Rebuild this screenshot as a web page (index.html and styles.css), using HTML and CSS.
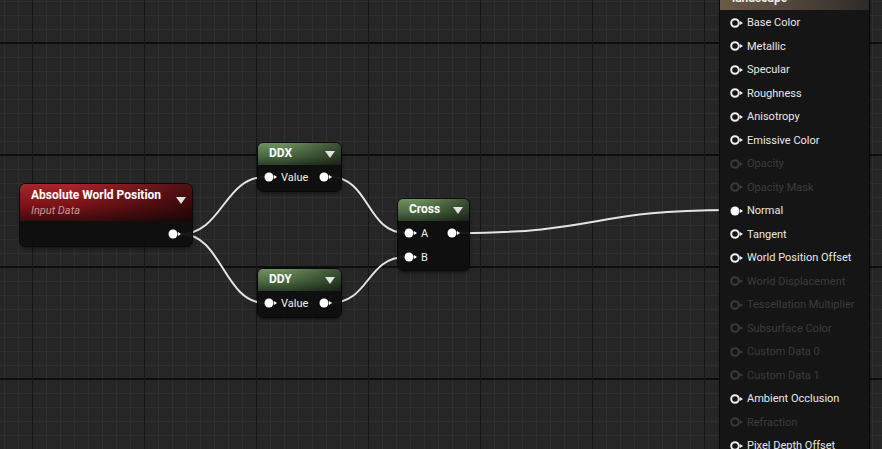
FILE: index.html
```html
<!DOCTYPE html>
<html lang="en">
<head>
  <meta charset="UTF-8" />
  <title>Material Graph</title>
  <link rel="stylesheet" href="styles.css">
</head>
<body>
  <div class="graph">
    <svg class="wires" width="882" height="449" viewBox="0 0 882 449">
      <path d="M181,234 C222,234 224,177 265,177" />
      <path d="M181,234 C222,234 224,303 265,303" />
      <path d="M330,177 C370,177 366,233 406,233" />
      <path d="M330,303 C370,303 366,257 406,257" />
      <path d="M459,233 C600,233 590,210 731,210" />
    </svg>

    <!-- Absolute World Position -->
    <div class="node node-awp">
      <div class="node-head head-red">
        <div>
          <div class="node-title">Absolute World Position</div>
          <div class="node-sub">Input Data</div>
        </div>
        <span class="caret"></span>
      </div>
      <div class="node-body">
        <div class="pin-row out-only">
          <svg class="pin" width="14" height="10" viewBox="0 0 14 10"><circle cx="5" cy="5" r="4.5"/><path d="M10,3 L13,5 L10,7 Z"/></svg>
        </div>
      </div>
    </div>

    <!-- DDX -->
    <div class="node node-ddx">
      <div class="node-head head-green">
        <div class="node-title">DDX</div>
        <span class="caret"></span>
      </div>
      <div class="node-body">
        <div class="pin-row">
          <span class="pin-in">
            <svg class="pin" width="14" height="10" viewBox="0 0 14 10"><circle cx="5" cy="5" r="4.5"/><path d="M10,3 L13,5 L10,7 Z"/></svg>
            Value
          </span>
          <svg class="pin" width="14" height="10" viewBox="0 0 14 10"><circle cx="5" cy="5" r="4.5"/><path d="M10,3 L13,5 L10,7 Z"/></svg>
        </div>
      </div>
    </div>

    <!-- DDY -->
    <div class="node node-ddy">
      <div class="node-head head-green">
        <div class="node-title">DDY</div>
        <span class="caret"></span>
      </div>
      <div class="node-body">
        <div class="pin-row">
          <span class="pin-in">
            <svg class="pin" width="14" height="10" viewBox="0 0 14 10"><circle cx="5" cy="5" r="4.5"/><path d="M10,3 L13,5 L10,7 Z"/></svg>
            Value
          </span>
          <svg class="pin" width="14" height="10" viewBox="0 0 14 10"><circle cx="5" cy="5" r="4.5"/><path d="M10,3 L13,5 L10,7 Z"/></svg>
        </div>
      </div>
    </div>

    <!-- Cross -->
    <div class="node node-cross">
      <div class="node-head head-green">
        <div class="node-title">Cross</div>
        <span class="caret"></span>
      </div>
      <div class="node-body">
        <div class="pin-row">
          <span class="pin-in">
            <svg class="pin" width="14" height="10" viewBox="0 0 14 10"><circle cx="5" cy="5" r="4.5"/><path d="M10,3 L13,5 L10,7 Z"/></svg>
            A
          </span>
          <svg class="pin" width="14" height="10" viewBox="0 0 14 10"><circle cx="5" cy="5" r="4.5"/><path d="M10,3 L13,5 L10,7 Z"/></svg>
        </div>
        <div class="pin-row">
          <span class="pin-in">
            <svg class="pin" width="14" height="10" viewBox="0 0 14 10"><circle cx="5" cy="5" r="4.5"/><path d="M10,3 L13,5 L10,7 Z"/></svg>
            B
          </span>
        </div>
      </div>
    </div>

    <!-- Material result node -->
    <div class="result">
      <div class="result-head">landscape</div>
      <ul class="inputs">
        <li><svg class="ring" width="14" height="10" viewBox="0 0 14 10"><circle cx="5" cy="5" r="3.8"/><path d="M10,3 L13,5 L10,7 Z"/></svg>Base Color</li>
        <li><svg class="ring" width="14" height="10" viewBox="0 0 14 10"><circle cx="5" cy="5" r="3.8"/><path d="M10,3 L13,5 L10,7 Z"/></svg>Metallic</li>
        <li><svg class="ring" width="14" height="10" viewBox="0 0 14 10"><circle cx="5" cy="5" r="3.8"/><path d="M10,3 L13,5 L10,7 Z"/></svg>Specular</li>
        <li><svg class="ring" width="14" height="10" viewBox="0 0 14 10"><circle cx="5" cy="5" r="3.8"/><path d="M10,3 L13,5 L10,7 Z"/></svg>Roughness</li>
        <li><svg class="ring" width="14" height="10" viewBox="0 0 14 10"><circle cx="5" cy="5" r="3.8"/><path d="M10,3 L13,5 L10,7 Z"/></svg>Anisotropy</li>
        <li><svg class="ring" width="14" height="10" viewBox="0 0 14 10"><circle cx="5" cy="5" r="3.8"/><path d="M10,3 L13,5 L10,7 Z"/></svg>Emissive Color</li>
        <li class="off"><svg class="ring" width="14" height="10" viewBox="0 0 14 10"><circle cx="5" cy="5" r="3.8"/><path d="M10,3 L13,5 L10,7 Z"/></svg>Opacity</li>
        <li class="off"><svg class="ring" width="14" height="10" viewBox="0 0 14 10"><circle cx="5" cy="5" r="3.8"/><path d="M10,3 L13,5 L10,7 Z"/></svg>Opacity Mask</li>
        <li><svg class="pin" width="14" height="10" viewBox="0 0 14 10"><circle cx="5" cy="5" r="4.5"/><path d="M10,3 L13,5 L10,7 Z"/></svg>Normal</li>
        <li><svg class="ring" width="14" height="10" viewBox="0 0 14 10"><circle cx="5" cy="5" r="3.8"/><path d="M10,3 L13,5 L10,7 Z"/></svg>Tangent</li>
        <li><svg class="ring" width="14" height="10" viewBox="0 0 14 10"><circle cx="5" cy="5" r="3.8"/><path d="M10,3 L13,5 L10,7 Z"/></svg>World Position Offset</li>
        <li class="off"><svg class="ring" width="14" height="10" viewBox="0 0 14 10"><circle cx="5" cy="5" r="3.8"/><path d="M10,3 L13,5 L10,7 Z"/></svg>World Displacement</li>
        <li class="off"><svg class="ring" width="14" height="10" viewBox="0 0 14 10"><circle cx="5" cy="5" r="3.8"/><path d="M10,3 L13,5 L10,7 Z"/></svg>Tessellation Multiplier</li>
        <li class="off"><svg class="ring" width="14" height="10" viewBox="0 0 14 10"><circle cx="5" cy="5" r="3.8"/><path d="M10,3 L13,5 L10,7 Z"/></svg>Subsurface Color</li>
        <li class="off"><svg class="ring" width="14" height="10" viewBox="0 0 14 10"><circle cx="5" cy="5" r="3.8"/><path d="M10,3 L13,5 L10,7 Z"/></svg>Custom Data 0</li>
        <li class="off"><svg class="ring" width="14" height="10" viewBox="0 0 14 10"><circle cx="5" cy="5" r="3.8"/><path d="M10,3 L13,5 L10,7 Z"/></svg>Custom Data 1</li>
        <li><svg class="ring" width="14" height="10" viewBox="0 0 14 10"><circle cx="5" cy="5" r="3.8"/><path d="M10,3 L13,5 L10,7 Z"/></svg>Ambient Occlusion</li>
        <li class="off"><svg class="ring" width="14" height="10" viewBox="0 0 14 10"><circle cx="5" cy="5" r="3.8"/><path d="M10,3 L13,5 L10,7 Z"/></svg>Refraction</li>
        <li><svg class="ring" width="14" height="10" viewBox="0 0 14 10"><circle cx="5" cy="5" r="3.8"/><path d="M10,3 L13,5 L10,7 Z"/></svg>Pixel Depth Offset</li>
      </ul>
    </div>
  </div>
</body>
</html>
```

FILE: styles.css
```css
* {
  margin: 0;
  padding: 0;
  box-sizing: border-box;
}

body {
  background-color: #262626;
  font-family: Roboto, 'Liberation Sans', sans-serif;
  color: #e6e6e6;
  overflow: hidden;
}

.graph {
  position: relative;
  width: 882px;
  height: 449px;
  overflow: hidden;
  background-color: #262626;
  background-image:
    linear-gradient(to right, #161616 1px, transparent 1px),
    linear-gradient(to bottom, #0e0e0e 2px, transparent 2px),
    linear-gradient(to right, #303030 1px, transparent 1px),
    linear-gradient(to bottom, #303030 1px, transparent 1px);
  background-size: 112px 112px, 112px 112px, 14px 14px, 14px 14px;
  background-position: 32px 0, 0 42px, 32px 0, 0 43px;
}

.wires {
  position: absolute;
  left: 0;
  top: 0;
}

.wires path {
  fill: none;
  stroke: #e4e4e4;
  stroke-width: 2;
}

/* graph nodes */
.node {
  position: absolute;
  background: rgba(14, 14, 14, 0.95);
  border-radius: 6px;
  box-shadow: 0 0 0 1px #090909, 0 2px 4px rgba(0, 0, 0, 0.6);
}

.node-awp {
  left: 20px;
  top: 184px;
  width: 172px;
  height: 62px;
}

.node-ddx {
  left: 258px;
  top: 143px;
  width: 83px;
  height: 48px;
}

.node-ddy {
  left: 258px;
  top: 269px;
  width: 83px;
  height: 48px;
}

.node-cross {
  left: 398px;
  top: 199px;
  width: 71px;
  height: 71px;
}

.node-head {
  display: flex;
  justify-content: space-between;
  align-items: flex-start;
  border-radius: 5px 5px 0 0;
  padding: 3px 6px 0 11px;
  height: 22px;
}

.head-red {
  height: 37px;
  padding-top: 4px;
  background:
    linear-gradient(to right, rgba(0, 0, 0, 0) 30%, rgba(0, 0, 0, 0.55)),
    linear-gradient(to bottom, #a8262b, #7a1218 60%, #3c0b0d);
}

.head-green {
  background:
    linear-gradient(to right, rgba(0, 0, 0, 0) 30%, rgba(0, 0, 0, 0.45)),
    linear-gradient(to bottom, #6f925f, #4a6840 60%, #2c3d29);
}

.node-title {
  font-size: 12px;
  font-weight: bold;
  line-height: 15px;
  color: #fff;
}

.node-sub {
  font-size: 11px;
  font-style: italic;
  line-height: 16px;
  color: #c79a9c;
}

.caret {
  width: 0;
  height: 0;
  margin-top: 5px;
  border-left: 5px solid transparent;
  border-right: 5px solid transparent;
  border-top: 7px solid #e2e2e2;
}

.head-red .caret {
  margin-top: 9px;
}

.node-body {
  display: flex;
  flex-direction: column;
  gap: 8px;
  padding: 4px 8px 0 6px;
}

.pin-row {
  display: flex;
  justify-content: space-between;
  align-items: center;
  height: 16px;
  font-size: 11px;
  color: #f0f0f0;
}

.out-only {
  justify-content: flex-end;
  padding-right: 2px;
}

.node-awp .node-body {
  padding-top: 5px;
}

.pin-in {
  display: flex;
  align-items: center;
  gap: 3px;
}

.pin circle,
.pin path {
  fill: #fff;
}

/* material result node */
.result {
  position: absolute;
  left: 719px;
  top: -8px;
  width: 151px;
  height: 470px;
  background: #151515;
  border: 1px solid #0a0a0a;
  border-radius: 5px;
  box-shadow: 0 0 2px rgba(0, 0, 0, 0.8);
}

.result-head {
  height: 17px;
  padding: 0 0 0 12px;
  font-size: 12px;
  font-weight: bold;
  line-height: 10px;
  color: #eee;
  border-radius: 4px 4px 0 0;
  background: linear-gradient(to right, #6c5a48, #4a4038 60%, #2e2a27);
}

.inputs {
  list-style: none;
  padding-top: 1px;
}

.inputs li {
  display: flex;
  align-items: center;
  gap: 3px;
  height: 23.5px;
  padding-left: 10px;
  font-size: 11px;
  color: #e8e8e8;
  white-space: nowrap;
}

.inputs li.off {
  color: #3c3c3c;
}

.ring circle {
  fill: none;
  stroke: #eee;
  stroke-width: 2;
}

.ring path {
  fill: #eee;
}

.off .ring circle {
  stroke: #3a3a3a;
}

.off .ring path {
  fill: #3a3a3a;
}
```
